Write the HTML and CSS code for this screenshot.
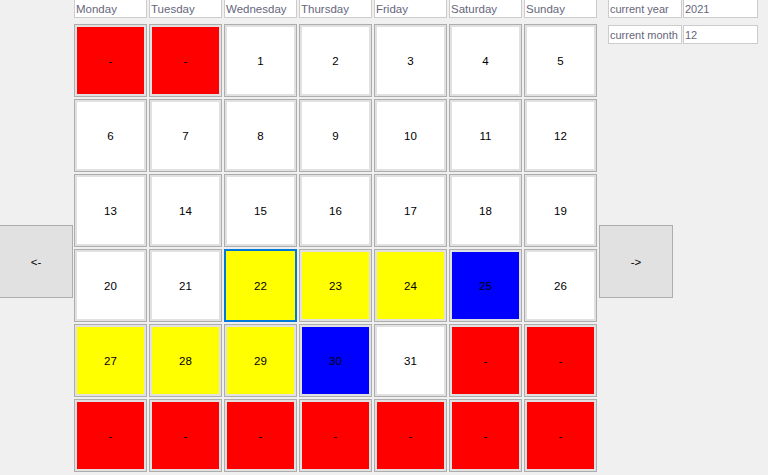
FILE: index.html
```html
<!DOCTYPE html>
<html lang="en">
<head>
  <meta charset="UTF-8">
  <title>Calendar</title>
  <link rel="stylesheet" href="styles.css">
</head>
<body>
  <div class="form">
    <div class="side-left">
      <button class="nav-btn">&lt;-</button>
    </div>

    <div class="calendar">
      <div class="weekdays">
        <div class="weekday">Monday</div>
        <div class="weekday">Tuesday</div>
        <div class="weekday">Wednesday</div>
        <div class="weekday">Thursday</div>
        <div class="weekday">Friday</div>
        <div class="weekday">Saturday</div>
        <div class="weekday">Sunday</div>
      </div>

      <div class="days">
        <!-- week 1 -->
        <div class="day red">-</div>
        <div class="day red">-</div>
        <div class="day">1</div>
        <div class="day">2</div>
        <div class="day">3</div>
        <div class="day">4</div>
        <div class="day">5</div>
        <!-- week 2 -->
        <div class="day">6</div>
        <div class="day">7</div>
        <div class="day">8</div>
        <div class="day">9</div>
        <div class="day">10</div>
        <div class="day">11</div>
        <div class="day">12</div>
        <!-- week 3 -->
        <div class="day">13</div>
        <div class="day">14</div>
        <div class="day">15</div>
        <div class="day">16</div>
        <div class="day">17</div>
        <div class="day">18</div>
        <div class="day">19</div>
        <!-- week 4 -->
        <div class="day">20</div>
        <div class="day">21</div>
        <div class="day yellow selected">22</div>
        <div class="day yellow">23</div>
        <div class="day yellow">24</div>
        <div class="day blue">25</div>
        <div class="day">26</div>
        <!-- week 5 -->
        <div class="day yellow">27</div>
        <div class="day yellow">28</div>
        <div class="day yellow">29</div>
        <div class="day blue">30</div>
        <div class="day">31</div>
        <div class="day red">-</div>
        <div class="day red">-</div>
        <!-- week 6 -->
        <div class="day red">-</div>
        <div class="day red">-</div>
        <div class="day red">-</div>
        <div class="day red">-</div>
        <div class="day red">-</div>
        <div class="day red">-</div>
        <div class="day red">-</div>
      </div>
    </div>

    <div class="side-right">
      <div class="info">
        <div class="info-label">current year</div>
        <div class="info-value">2021</div>
        <div class="info-label">current month</div>
        <div class="info-value">12</div>
      </div>
      <button class="nav-btn next-btn">-&gt;</button>
    </div>
  </div>
</body>
</html>
```

FILE: styles.css
```css
body {
  margin: 0;
  background-color: #f0f0f0;
  font-family: "Liberation Sans", Arial, sans-serif;
  font-size: 12px;
  overflow: hidden;
}
.form {
  display: flex;
  align-items: flex-start;
}
.side-left {
  width: 73px;
}
.nav-btn {
  display: block;
  width: 74px;
  height: 73px;
  padding: 0;
  background-color: #e1e1e1;
  border: 1px solid #adadad;
  font-family: inherit;
  font-size: 11.5px;
  color: #000;
}
.side-left .nav-btn {
  margin-left: -1px;
  margin-top: 225px;
}
.calendar {
  margin-left: 1px;
  width: 523px;
}
.weekdays,
.days {
  display: grid;
  grid-template-columns: repeat(7, 73px);
  column-gap: 2px;
}
.weekdays {
  margin-top: -1px;
}
.weekday {
  height: 19px;
  box-sizing: border-box;
  background-color: #fff;
  border: 1px solid #cccccc;
  padding: 1px 2px 0 1px;
  font-size: 11.5px;
  line-height: 16px;
  white-space: nowrap;
  overflow: hidden;
  color: #66667a;
}
.days {
  margin-top: 6px;
  row-gap: 2px;
}
.day {
  height: 73px;
  box-sizing: border-box;
  background-color: #fff;
  border: 1px solid #adadad;
  box-shadow: inset 0 0 0 2px #e1e1e1;
  display: flex;
  align-items: center;
  justify-content: center;
  font-size: 11.5px;
  color: #000;
}
.day.red {
  background-color: #ff0000;
}
.day.yellow {
  background-color: #ffff00;
}
.day.blue {
  background-color: #0000ff;
}
.day.selected {
  border: 2px solid #0078d7;
  box-shadow: none;
}
.side-right {
  margin-left: 2px;
  display: flex;
  flex-direction: column;
}
.info {
  margin-left: 9px;
  margin-top: -1px;
  display: grid;
  grid-template-columns: 74px 75px;
  column-gap: 1px;
  row-gap: 7px;
}
.info-label,
.info-value {
  height: 19px;
  box-sizing: border-box;
  background-color: #fff;
  border: 1px solid #cccccc;
  padding: 1px 2px 0 1px;
  font-size: 11px;
  line-height: 16px;
  white-space: nowrap;
  overflow: hidden;
  color: #66667a;
}
.next-btn {
  margin-top: 181px;
}
```
